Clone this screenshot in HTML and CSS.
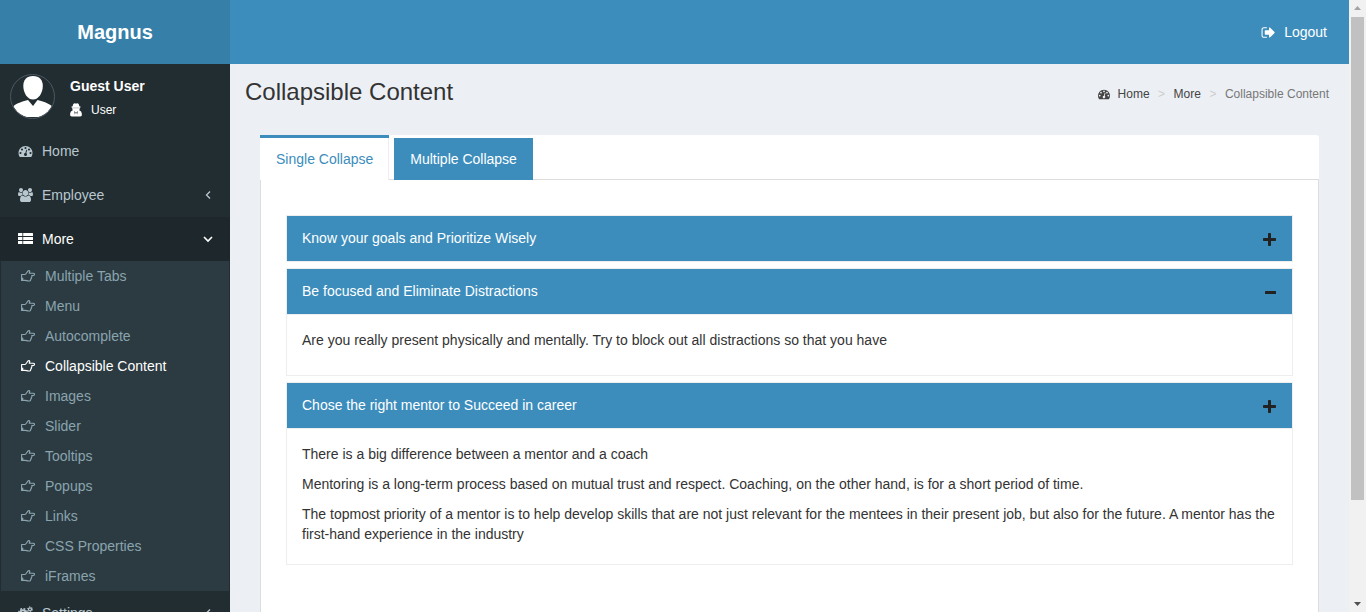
FILE: index.html
```
<!DOCTYPE html>
<html lang="en">
<head>
<meta charset="utf-8">
<title>Collapsible Content</title>
<link rel="stylesheet" href="styles.css">
</head>
<body>
<svg class="sprite" aria-hidden="true">
  <symbol id="gauge" viewBox="0 0 1792 1792"><path d="M384 1152q0-53-37.5-90.5t-90.5-37.5-90.5 37.5-37.5 90.5 37.5 90.5 90.5 37.5 90.5-37.5 37.5-90.5zm192-448q0-53-37.5-90.5t-90.5-37.5-90.5 37.5-37.5 90.5 37.5 90.5 90.5 37.5 90.5-37.5 37.5-90.5zm428 481l101-382q6-26-7.5-48.5t-38.5-29.5-48 6.5-30 39.5l-101 382q-60 5-107 43.5t-63 98.5q-20 77 20 146t117 89 146-20 89-117q16-60-6-117t-72-91zm660-33q0-53-37.5-90.5t-90.5-37.5-90.5 37.5-37.5 90.5 37.5 90.5 90.5 37.5 90.5-37.5 37.5-90.5zm-640-640q0-53-37.5-90.5t-90.5-37.5-90.5 37.5-37.5 90.5 37.5 90.5 90.5 37.5 90.5-37.5 37.5-90.5zm448 192q0-53-37.5-90.5t-90.5-37.5-90.5 37.5-37.5 90.5 37.5 90.5 90.5 37.5 90.5-37.5 37.5-90.5zm320 448q0 261-141 483-19 29-54 29h-1402q-35 0-54-29-141-221-141-483 0-182 71-348t191-286 286-191 348-71 348 71 286 191 191 286 71 348z"/></symbol>
  <symbol id="signout" viewBox="0 0 1792 1792"><path d="M704 1440q0 4 1 20t.5 26.5-3 23.5-10 19.5-20.5 6.5h-320q-119 0-203.5-84.5t-84.5-203.5v-704q0-119 84.5-203.5t203.5-84.5h320q13 0 22.5 9.5t9.5 22.5q0 4 1 20t.5 26.5-3 23.5-10 19.5-20.5 6.5h-320q-66 0-113 47t-47 113v704q0 66 47 113t113 47h312l11.5 1 11.5 3 8 5.5 7 9 2 13.5zm928-544q0 26-19 45l-544 544q-19 19-45 19t-45-19-19-45v-288h-448q-26 0-45-19t-19-45v-384q0-26 19-45t45-19h448v-288q0-26 19-45t45-19 45 19l544 544q19 19 19 45z"/></symbol>
  <symbol id="users" viewBox="-64 0 1920 1792"><path d="M529 896q-162 5-265 128h-134q-82 0-138-40.5t-56-118.5q0-353 124-353 6 0 43.5 21t97.5 42.5 119 21.5q67 0 133-23-5 37-5 66 0 139 81 256zm1071 637q0 120-73 189.5t-194 69.5h-874q-121 0-194-69.5t-73-189.5q0-53 3.5-103.5t14-109 26.5-108.5 43-97.5 62-81 85.5-53.5 111.5-20q10 0 43 21.5t73 48 107 48 135 21.5 135-21.5 107-48 73-48 43-21.5q61 0 111.5 20t85.5 53.5 62 81 43 97.5 26.5 108.5 14 109 3.5 103.5zm-1024-1277q0 106-75 181t-181 75-181-75-75-181 75-181 181-75 181 75 75 181zm704 384q0 159-112.5 271.5t-271.5 112.5-271.5-112.5-112.5-271.5 112.5-271.5 271.5-112.5 271.5 112.5 112.5 271.5zm576 225q0 78-56 118.5t-138 40.5h-134q-103-123-265-128 81-117 81-256 0-29-5-66 66 23 133 23 59 0 119-21.5t97.5-42.5 43.5-21q124 0 124 353zm-128-609q0 106-75 181t-181 75-181-75-75-181 75-181 181-75 181 75 75 181z"/></symbol>
  <symbol id="thlist" viewBox="0 0 15 14"><path d="M.6 1h3.800v3H0V1.600q0-.6.6-.6zM5.200 1h9.200q.6 0 .6.6V4H5.200zM0 5h4.400v3H0zM5.200 5H15v3H5.200zM0 9h4.400v3H.6q-.6 0-.6-.6zM5.200 9H15v2.400q0 .6-.6.6H5.200z"/></symbol>
  <symbol id="hand" viewBox="0 0 14 14"><path d="M.6 5.500H4c1.300 0 2.400-3.900 3.700-3.900 1.500 0 1.200 1.500.5 2.600h4c1.700 0 1.700 2.300 0 2.300h-1.500c.5.700.2 1.600-.4 1.900.3.800 0 1.500-.6 1.700.2 1.300-.4 1.900-1.900 1.900-1.700 0-2.400-.6-3.800-.6H.6z" fill="none" stroke="currentColor" stroke-width="1.150" stroke-linejoin="round"/><path d="M1 8.700h1.300v2.300H1z"/></symbol>
  <symbol id="secret" viewBox="0 0 12 14"><path fill-rule="evenodd" d="M2.700 3.200C3 1.200 3.700.3 4.600.3c.6 0 .9.300 1.400.3s.8-.3 1.400-.3c.9 0 1.600.9 1.900 2.900.9.200 1.400.4 1.400.7s-.4.500-1 .7c.2 1.100 0 1.900-.5 2.700 1.900.6 2.700 2.200 2.700 4.500 0 1.100-.7 1.700-1.700 1.700H1.800c-1 0-1.700-.6-1.700-1.700 0-2.300.8-3.900 2.700-4.500-.5-.8-.7-1.600-.5-2.700-.6-.2-1-.4-1-.7s.5-.5 1.400-.7zM4.200 8l.6 3.500.9-2zm3.600 0L6.300 9.500l.9 2z"/><path d="M3 4.900h6" fill="none" stroke="#222d32" stroke-opacity=".4" stroke-width=".7"/></symbol>
  <symbol id="left" viewBox="0 0 8 12"><path d="M6 2.500L2.500 6 6 9.500" fill="none" stroke="currentColor" stroke-width="1.300"/></symbol>
  <symbol id="down" viewBox="0 0 12 12"><path d="M2 4l4 4 4-4" fill="none" stroke="currentColor" stroke-width="1.600"/></symbol>
  <symbol id="cogs" viewBox="0 0 15 14"><g fill="none" stroke="currentColor"><circle cx="5" cy="7" r="2.700" stroke-width="2"/><circle cx="5" cy="7" r="4.300" stroke-width="1.400" stroke-dasharray="1.900 1.480"/><circle cx="12" cy="3.300" r="1.500" stroke-width="1.300"/><circle cx="12" cy="3.300" r="2.500" stroke-width="1" stroke-dasharray="1.300 1.320"/><circle cx="12" cy="10.700" r="1.500" stroke-width="1.300"/><circle cx="12" cy="10.700" r="2.500" stroke-width="1" stroke-dasharray="1.300 1.320"/></g></symbol>
  <symbol id="plus" viewBox="0 0 13 13"><path d="M5 .8q0-.8.8-.8h1.400q.8 0 .8.800V5h4.200q.8 0 .8.800v1.400q0 .8-.8.800H8v4.200q0 .8-.8.800H5.800q-.8 0-.8-.8V8H.8Q0 8 0 7.200V5.800Q0 5 .8 5H5z"/></symbol>
  <symbol id="minus" viewBox="0 0 11 13"><rect y="5" width="11" height="3" rx=".6"/></symbol>
</svg>
<div class="shell">
  <div class="app">
    <header class="topbar">
      <a class="brand" href="#">Magnus</a>
      <nav class="topnav"><a class="logout" href="#"><svg class="icon"><use href="#signout"/></svg>Logout</a></nav>
    </header>
    <div class="columns">
      <aside class="sidebar">
        <div class="user">
          <svg class="avatar" viewBox="0 0 45 45" role="img" aria-label="Guest User"><defs><clipPath id="round"><circle cx="22.500" cy="22.500" r="21.500"/></clipPath></defs><g clip-path="url(#round)" fill="#fff"><path d="M23 2c6.500 0 9.800 4 9.800 10 0 7-4.300 13.500-9.800 13.500S13.300 19 13.300 12c0-6 3.200-10 9.700-10z"/><path d="M1 43V34.500c4-4.500 9-6.500 17-8.500l5 6 4.500-6c8 2 13 4 17 8.500V43z"/></g><circle cx="22.500" cy="22.500" r="22" fill="none" stroke="#4c5763"/></svg>
          <div class="who"><strong class="name">Guest User</strong><a class="role" href="#"><svg class="role-icon"><use href="#secret"/></svg>User</a></div>
        </div>
        <nav class="menu">
          <a class="item" href="#"><svg class="item-icon"><use href="#gauge"/></svg>Home</a>
          <a class="item" href="#"><svg class="item-icon"><use href="#users"/></svg>Employee<svg class="caret"><use href="#left"/></svg></a>
          <a class="item open" href="#"><svg class="item-icon"><use href="#thlist"/></svg>More<svg class="caret"><use href="#down"/></svg></a>
          <div class="submenu">
            <a class="sub" href="#"><svg class="sub-icon"><use href="#hand"/></svg>Multiple Tabs</a>
            <a class="sub" href="#"><svg class="sub-icon"><use href="#hand"/></svg>Menu</a>
            <a class="sub" href="#"><svg class="sub-icon"><use href="#hand"/></svg>Autocomplete</a>
            <a class="sub current" href="#"><svg class="sub-icon"><use href="#hand"/></svg>Collapsible Content</a>
            <a class="sub" href="#"><svg class="sub-icon"><use href="#hand"/></svg>Images</a>
            <a class="sub" href="#"><svg class="sub-icon"><use href="#hand"/></svg>Slider</a>
            <a class="sub" href="#"><svg class="sub-icon"><use href="#hand"/></svg>Tooltips</a>
            <a class="sub" href="#"><svg class="sub-icon"><use href="#hand"/></svg>Popups</a>
            <a class="sub" href="#"><svg class="sub-icon"><use href="#hand"/></svg>Links</a>
            <a class="sub" href="#"><svg class="sub-icon"><use href="#hand"/></svg>CSS Properties</a>
            <a class="sub" href="#"><svg class="sub-icon"><use href="#hand"/></svg>iFrames</a>
          </div>
          <a class="item" href="#"><svg class="item-icon"><use href="#cogs"/></svg>Settings<svg class="caret"><use href="#left"/></svg></a>
        </nav>
      </aside>
      <main class="content">
        <div class="heading">
          <h1 class="title">Collapsible Content</h1>
          <nav class="crumbs" aria-label="Breadcrumb"><a class="crumb" href="#"><svg class="crumb-icon"><use href="#gauge"/></svg>Home</a><span class="sep">&gt;</span><a class="crumb" href="#">More</a><span class="sep">&gt;</span><span class="here">Collapsible Content</span></nav>
        </div>
        <section class="card">
          <div class="tabs" role="tablist">
            <button class="tab active" role="tab" aria-selected="true">Single Collapse</button>
            <button class="tab" role="tab" aria-selected="false">Multiple Collapse</button>
          </div>
          <div class="pane" role="tabpanel">
            <div class="fold">
              <button class="toggle" aria-expanded="false">Know your goals and Prioritize Wisely<svg class="sign"><use href="#plus"/></svg></button>
            </div>
            <div class="fold">
              <button class="toggle" aria-expanded="true">Be focused and Eliminate Distractions<svg class="sign minus"><use href="#minus"/></svg></button>
              <div class="body"><p class="text">Are you really present physically and mentally. Try to block out all distractions so that you have</p></div>
            </div>
            <div class="fold">
              <button class="toggle" aria-expanded="true">Chose the right mentor to Succeed in career<svg class="sign"><use href="#plus"/></svg></button>
              <div class="body long">
                <p class="text">There is a big difference between a mentor and a coach</p>
                <p class="text">Mentoring is a long-term process based on mutual trust and respect. Coaching, on the other hand, is for a short period of time.</p>
                <p class="text">The topmost priority of a mentor is to help develop skills that are not just relevant for the mentees in their present job, but also for the future. A mentor has the first-hand experience in the industry</p>
              </div>
            </div>
          </div>
        </section>
      </main>
    </div>
  </div>
  <div class="scrollbar" aria-hidden="true"><span class="arrow up"></span><span class="track"><span class="thumb"></span></span><span class="arrow down"></span></div>
</div>
</body>
</html>
```
FILE: styles.css
```
* { box-sizing: border-box; }
body { margin: 0; font: 14px/20px "Liberation Sans", Arial, sans-serif; color: #333; background: #ecf0f5; }
a { color: inherit; text-decoration: none; }
button { font: inherit; border: 0; margin: 0; cursor: pointer; }
svg { fill: currentColor; flex: none; }
.sprite { display: none; }
.shell { display: flex; height: 100vh; overflow: hidden; }
.app { flex: 1; min-width: 0; display: flex; flex-direction: column; }

.topbar { display: flex; flex: none; height: 64px; color: #fff; background: #3c8dbc; }
.brand { width: 230px; background: #367fa9; font-size: 20px; font-weight: bold; line-height: 64px; text-align: center; }
.topnav { flex: 1; display: flex; justify-content: flex-end; align-items: center; padding-right: 22px; }
.logout { display: flex; align-items: center; gap: 8px; }
.icon { width: 15px; height: 15px; }

.columns { flex: 1; min-height: 0; display: flex; overflow: hidden; }
.sidebar { width: 230px; flex: none; background: #222d32; color: #b8c7ce; }
.user { display: flex; gap: 15px; padding: 10px; height: 65px; color: #fff; }
.avatar { width: 45px; height: 45px; }
.who { display: flex; flex-direction: column; gap: 4px; padding-top: 2px; }
.role { display: flex; align-items: center; gap: 9px; font-size: 12px; }
.role-icon { width: 12px; height: 14px; }
.item { display: flex; align-items: center; gap: 9px; height: 44px; padding: 0 16px 0 18px; }
.item-icon { width: 15px; height: 14px; }
.caret { width: 12px; height: 12px; margin-left: auto; }
.open { background: #1e282c; color: #fff; }
.submenu { margin: 0 1px; background: #2c3b41; color: #8aa4af; }
.sub { display: flex; align-items: center; gap: 10px; height: 30px; padding-left: 20px; }
.sub-icon { width: 14px; height: 14px; }
.current { color: #fff; }

.content { flex: 1; min-width: 0; display: flex; flex-direction: column; }
.heading { display: flex; justify-content: space-between; padding: 15px 20px 0 15px; }
.title { margin: 0; font-size: 24px; line-height: 26px; font-weight: normal; }
.crumbs { display: flex; align-items: center; font-size: 12px; padding-top: 4px; }
.crumb { display: flex; align-items: center; gap: 8px; color: #444; }
.crumb-icon { width: 12px; height: 12px; }
.sep { width: 24px; text-align: center; color: #ccc; }
.here { color: #777; }

.card { flex: 1; display: flex; flex-direction: column; margin: 30px 30px 0; background: #fff; border-radius: 3px 3px 0 0; }
.tabs { display: flex; gap: 5px; border-bottom: 1px solid #ddd; }
.tab { height: 45px; margin-bottom: -1px; padding: 0 16px; border-top: 3px solid #fff; background: #3c8dbc; background-clip: padding-box; color: #fff; line-height: 42px; }
.active { border-top-color: #3c8dbc; box-shadow: inset -1px 0 #eee; background: #fff; color: #3c8dbc; }
.pane { flex: 1; display: flex; flex-direction: column; gap: 6px; padding: 35px 25px; border: solid #ddd; border-width: 0 1px; }
.fold { border: 1px solid #eee; }
.toggle { display: flex; width: 100%; align-items: flex-start; justify-content: space-between; padding: 12px 16px 13px 15px; background: #3c8dbc; color: #fff; text-align: left; }
.sign { width: 13px; height: 13px; margin-top: 5px; color: #222; }
.minus { width: 11px; }
.body { border-top: 1px solid #eee; padding: 15px 15px 25px; }
.long { padding-bottom: 20px; }
.text { margin: 0 0 10px; }
.text:last-child { margin: 0; }

.scrollbar { width: 17px; flex: none; display: flex; flex-direction: column; align-items: center; background: #f1f1f1; }
.arrow { width: 7px; height: 4px; margin: 6px 0 7px; background: #a3a3a3; clip-path: polygon(50% 0, 100% 100%, 0 100%); }
.arrow.down { margin: 7px 0 6px; background: #505050; clip-path: polygon(0 0, 100% 0, 50% 100%); }
.track { flex: 1; display: flex; width: 13px; }
.thumb { width: 100%; height: 83.5%; background: #c1c1c1; }
```
